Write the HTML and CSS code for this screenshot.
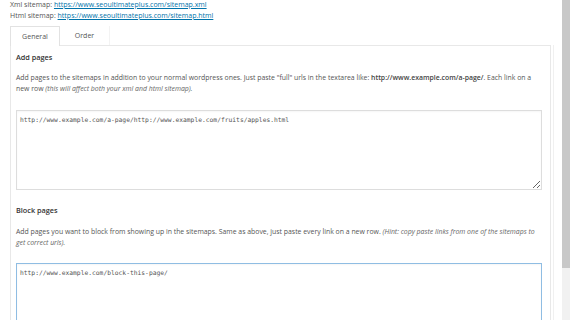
FILE: index.html
```html
<!DOCTYPE html>
<html>
<head>
<meta charset="utf-8">
<link rel="stylesheet" href="styles.css">
</head>
<body>
<div class="page">
  <div class="main">
    <p class="sitemap-line">Xml sitemap: <a href="#">https://www.seoultimateplus.com/sitemap.xml</a></p>
    <p class="sitemap-line">Html sitemap: <a href="#">https://www.seoultimateplus.com/sitemap.html</a></p>
    <div class="tabs">
      <div class="tab active">General</div>
      <div class="tab">Order</div>
    </div>
    <div class="panel">
      <h3 class="section-title">Add pages</h3>
      <p class="desc">Add pages to the sitemaps in addition to your normal wordpress ones. Just paste "full" urls in the textarea like: <b>http://www.example.com/a-page/</b>. Each link on a new row <i>(this will affect both your xml and html sitemap).</i></p>
      <textarea class="urls">http://www.example.com/a-page/http://www.example.com/fruits/apples.html</textarea>
      <h3 class="section-title second">Block pages</h3>
      <p class="desc second">Add pages you want to block from showing up in the sitemaps. Same as above, just paste every link on a new row. <i>(Hint: copy paste links from one of the sitemaps to get correct urls).</i></p>
      <textarea class="urls focus">http://www.example.com/block-this-page/</textarea>
    </div>
  </div>
  <div class="scrollbar"><div class="thumb"></div></div>
</div>
</body>
</html>
```
FILE: styles.css
```css
html, body {
  margin: 0;
  padding: 0;
  background: #ffffff;
  overflow: hidden;
}
body {
  font-family: "Open Sans", "Liberation Sans", sans-serif;
  color: #444;
  width: 570px;
  height: 320px;
}
.page {
  display: flex;
  height: 320px;
}
.main {
  flex: 1;
  padding: 0 10px 0 10px;
  overflow: hidden;
}
.sitemap-line {
  margin: 0;
  font-size: 7px;
  line-height: 11px;
  color: #555;
}
.sitemap-line:first-child {
  margin-top: -1.5px;
}
.sitemap-line a {
  color: #0073aa;
  text-decoration: underline;
}
.tabs {
  display: flex;
  margin-top: 5.5px;
  height: 19px;
}
.tab {
  width: 50px;
  height: 19px;
  font-size: 7px;
  line-height: 19px;
  text-align: center;
  color: #555;
  box-sizing: border-box;
  border-right: 1px solid #f3f3f3;
}
.tab.active {
  border: 1px solid #e2e2e2;
  border-bottom: none;
  background: #fff;
  position: relative;
  z-index: 1;
  height: 20px;
}
.panel {
  border: 1px solid #e8e8e8;
  box-shadow: 2px 0 0 #fff, 3px 0 0 #f0f0f0;
  padding: 5px 8px 0 5px;
  height: 400px;
  margin-right: 1px;
}
.section-title {
  margin: 0;
  font-size: 7.3px;
  font-weight: 600;
  line-height: 12px;
  color: #333;
}
.section-title.second {
  margin-top: 14px;
}
.desc {
  margin: 8.5px 0 16.5px 0;
  font-size: 6.9px;
  line-height: 11px;
  color: #555;
}
.desc.second {
  margin: 9.5px 0 15.5px 0;
}
.desc b {
  font-weight: 600;
  color: #444;
}
.desc i {
  color: #666;
}
.urls {
  display: block;
  width: 100%;
  box-sizing: border-box;
  height: 80px;
  margin: 0;
  border: 1px solid #ddd;
  padding: 4px 3px;
  font-family: "DejaVu Sans Mono", "Liberation Mono", monospace;
  font-size: 6.3px;
  line-height: 9px;
  color: #555;
  resize: vertical;
  background: #fff;
  box-shadow: inset 0 1px 2px rgba(0,0,0,0.04);
}
.urls.focus {
  border-color: #8fbde3;
  height: 120px;
}
.scrollbar {
  width: 8px;
  height: 320px;
  background: #f1f1f1;
  flex: none;
}
.thumb {
  height: 268px;
  background: #c8c8c8;
}
```
